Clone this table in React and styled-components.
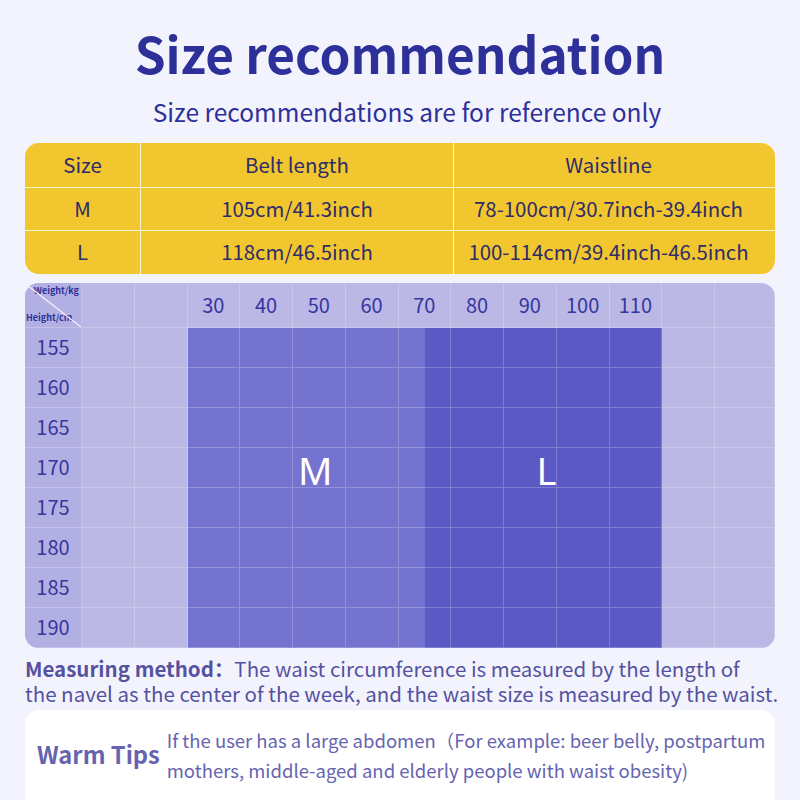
import React from "react";
import styled, { createGlobalStyle } from "styled-components";

const Global = createGlobalStyle`
  html, body { margin: 0; padding: 0; background: #f3f3fd; }
  body { font-family: "Noto Sans CJK SC", "Noto Sans", sans-serif; }
`;

const Page = styled.div`
  width: 800px;
  height: 800px;
  overflow: hidden;
  background: #f3f3fd;
  padding: 0 25px;
  box-sizing: border-box;
  display: flex;
  flex-direction: column;
  & > * { flex-shrink: 0; }
`;

const Title = styled.h1`
  margin: 20px 0 0;
  text-align: center;
  font-size: 49.5px;
  line-height: 66px;
  font-weight: 700;
  color: #2e309a;
`;

const Subtitle = styled.p`
  margin: 0;
  text-align: center;
  font-size: 24.5px;
  line-height: 48px;
  color: #2e309a;
  padding: 2px 0 0 14px;
  height: 50px;
  box-sizing: border-box;
`;

const SizeTable = styled.div`
  margin-top: 7px;
  display: grid;
  grid-template-columns: 115px 313px 1fr;
  grid-template-rows: 44px 43px 44px;
  background: #f2c62e;
  border-radius: 14px;
  overflow: hidden;
`;

const TCell = styled.div`
  display: flex;
  align-items: center;
  justify-content: center;
  font-size: 20.4px;
  color: #2f2c6a;
  padding-bottom: 3px;
  padding-right: ${(p) => (p.$last ? 12 : 0)}px;
  border-left: ${(p) => (p.$first ? "none" : "1.5px solid #fff5d0")};
  border-top: ${(p) => (p.$top ? "none" : "1.5px solid #fff5d0")};
`;

const Chart = styled.div`
  margin-top: 9px;
  display: grid;
  grid-template-columns: 57px repeat(24, 26.375px) 1fr;
  grid-template-rows: 45px repeat(8, 40px);
  background: #bbb8e6;
  border-radius: 14px;
  overflow: hidden;
`;

const LabelCol = styled.div`
  grid-column: 1 / 2;
  grid-row: 1 / 10;
  background: #b2b0e2;
`;

const Block = styled.div`
  grid-row: 2 / 10;
  grid-column: ${(p) => p.$cols};
  background: ${(p) => p.$bg};
  display: flex;
  align-items: center;
  justify-content: center;
  color: #ffffff;
  font-family: "Noto Sans", "Open Sans", sans-serif;
  font-size: 38px;
  padding-left: ${(p) => p.$shift || 0}px;
  padding-bottom: 36px;
`;

const GridCell = styled.div`
  grid-row: ${(p) => p.$row};
  grid-column: ${(p) => p.$col};
  border-right: 1px solid rgba(255, 255, 255, 0.22);
  border-bottom: 1px solid rgba(255, 255, 255, 0.22);
  display: flex;
  align-items: center;
  justify-content: center;
  font-size: 20px;
  color: #37359e;
  padding-bottom: ${(p) => (p.$head ? 1 : 2)}px;
  position: relative;
  z-index: 1;
`;

const Corner = styled.div`
  grid-row: 1 / 2;
  grid-column: 1 / 2;
  position: relative;
  z-index: 1;
  border-bottom: 1px solid rgba(255, 255, 255, 0.22);
  border-right: 1px solid rgba(255, 255, 255, 0.22);
  font-size: 9px;
  font-weight: 700;
  line-height: 12px;
  color: #2e309a;
  display: flex;
  flex-direction: column;
  justify-content: space-between;
  padding: 2px 0 3px 0;
`;

const CornerLine = styled.svg`
  position: absolute;
  inset: 0;
  width: 100%;
  height: 100%;
`;

const CornerTop = styled.span`
  align-self: flex-end;
  padding-right: 2px;
`;

const CornerBottom = styled.span`
  padding-left: 1px;
`;

const Measure = styled.p`
  margin: 8px 0 0;
  font-size: 20.5px;
  line-height: 24.5px;
  color: #5552a0;
  white-space: nowrap;
`;

const MeasureLabel = styled.b`
  font-weight: 700;
`;

const TipsCard = styled.div`
  margin-top: 5px;
  background: #ffffff;
  border-radius: 14px;
  height: 120px;
  display: flex;
  align-items: flex-start;
  padding: 15px 12px 0;
  gap: 7px;
`;

const TipsTitle = styled.div`
  font-size: 23.7px;
  font-weight: 700;
  color: #6664b0;
  margin-top: 12px;
  white-space: nowrap;
`;

const TipsText = styled.div`
  font-size: 18.5px;
  line-height: 30px;
  color: #6664b0;
  white-space: nowrap;
`;

const weights = [30, 40, 50, 60, 70, 80, 90, 100, 110];
const heights = [155, 160, 165, 170, 175, 180, 185, 190];

export default function App() {
  const cells = [];
  for (let c = 0; c < 13; c++) {
    const col = `${2 + c * 2} / ${4 + c * 2}`;
    const w = c >= 2 && c <= 10 ? weights[c - 2] : "";
    cells.push(
      <GridCell key={`h${c}`} $row="1 / 2" $col={col} $head>
        {w}
      </GridCell>
    );
  }
  heights.forEach((h, r) => {
    cells.push(
      <GridCell key={`l${r}`} $row={`${r + 2} / ${r + 3}`} $col="1 / 2">
        {h}
      </GridCell>
    );
    for (let c = 0; c < 13; c++) {
      cells.push(
        <GridCell
          key={`c${r}-${c}`}
          $row={`${r + 2} / ${r + 3}`}
          $col={`${2 + c * 2} / ${4 + c * 2}`}
        />
      );
    }
  });

  return (
    <>
      <Global />
      <Page>
        <Title>Size recommendation</Title>
        <Subtitle>Size recommendations are for reference only</Subtitle>
        <SizeTable>
          <TCell $first $top>Size</TCell>
          <TCell $top>Belt length</TCell>
          <TCell $top $last>Waistline</TCell>
          <TCell $first>M</TCell>
          <TCell>105cm/41.3inch</TCell>
          <TCell $last>78-100cm/30.7inch-39.4inch</TCell>
          <TCell $first>L</TCell>
          <TCell>118cm/46.5inch</TCell>
          <TCell $last>100-114cm/39.4inch-46.5inch</TCell>
        </SizeTable>
        <Chart>
          <LabelCol />
          <Block $cols="6 / 15" $bg="#7473d0" $shift={18}>M</Block>
          <Block $cols="15 / 24" $bg="#5b59c4" $shift={6}>L</Block>
          <Corner>
            <CornerLine viewBox="0 0 57 45" preserveAspectRatio="none">
              <line x1="2" y1="2" x2="57" y2="45" stroke="#f4f3ff" strokeWidth="1.3" />
            </CornerLine>
            <CornerTop>Weight/kg</CornerTop>
            <CornerBottom>Height/cm</CornerBottom>
          </Corner>
          {cells}
        </Chart>
        <Measure>
          <MeasureLabel>Measuring method：</MeasureLabel>The waist circumference is measured by the length of
          <br />
          the navel as the center of the week, and the waist size is measured by the waist.
        </Measure>
        <TipsCard>
          <TipsTitle>Warm Tips</TipsTitle>
          <TipsText>
            If the user has a large abdomen（For example: beer belly, postpartum
            <br />
            mothers, middle-aged and elderly people with waist obesity)
          </TipsText>
        </TipsCard>
      </Page>
    </>
  );
}
